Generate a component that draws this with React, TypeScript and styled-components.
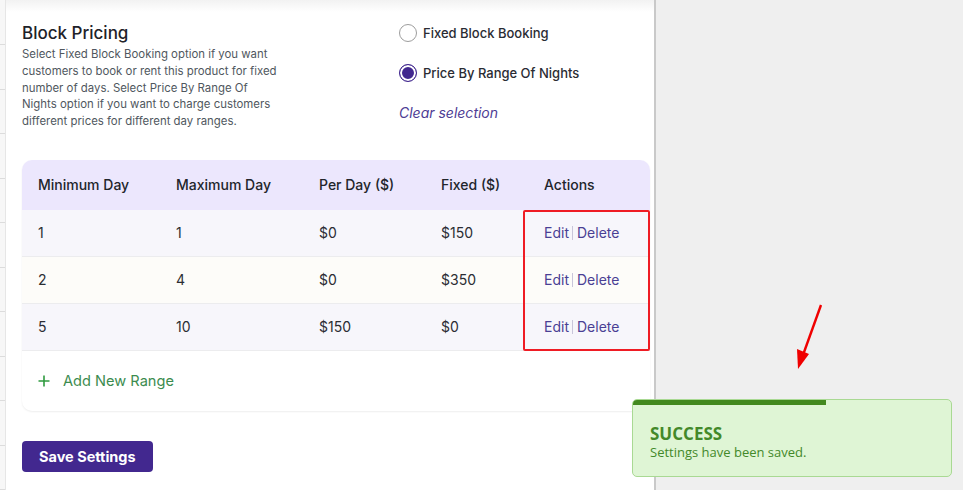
import styled, { createGlobalStyle } from 'styled-components';

const GlobalStyle = createGlobalStyle`
  html, body { margin: 0; padding: 0; }
  body {
    width: 963px;
    height: 490px;
    overflow: hidden;
    font-family: Inter, "Noto Sans", sans-serif;
    background: #efefef;
  }
`;

const rows = [
  { min: '1', max: '1', perDay: '$0', fixed: '$150' },
  { min: '2', max: '4', perDay: '$0', fixed: '$350' },
  { min: '5', max: '10', perDay: '$150', fixed: '$0' },
];

const App = () => {
  return (
    <Page>
      <GlobalStyle />
      <SideStrip>
        {Array.from({ length: 11 }).map((_, i) => (
          <StripLine key={i} />
        ))}
      </SideStrip>
      <Main>
        <TopFade />
        <Intro>
          <Description>
            <h2>Block Pricing</h2>
            <p>
              Select Fixed Block Booking option if you want customers to book or rent this
              product for fixed number of days. Select Price By Range Of Nights option if you
              want to charge customers different prices for different day ranges.
            </p>
          </Description>
          <Options>
            <Radio>
              <RadioDot $checked={false} />
              Fixed Block Booking
            </Radio>
            <Radio>
              <RadioDot $checked />
              Price By Range Of Nights
            </Radio>
            <ClearLink>Clear selection</ClearLink>
          </Options>
        </Intro>

        <TableCard>
          <HeadRow>
            <span>Minimum Day</span>
            <span>Maximum Day</span>
            <span>Per Day ($)</span>
            <span>Fixed ($)</span>
            <span>Actions</span>
          </HeadRow>
          <Body>
            {rows.map((r, i) => (
              <Row key={i} $alt={i % 2 === 1}>
                <span>{r.min}</span>
                <span>{r.max}</span>
                <span>{r.perDay}</span>
                <span>{r.fixed}</span>
                <Actions>
                  <a>Edit</a>
                  <Divider />
                  <a>Delete</a>
                </Actions>
              </Row>
            ))}
            <Highlight />
          </Body>
          <AddRange>
            <svg width="12" height="12" viewBox="0 0 12 12">
              <path d="M6 0.5v11M0.5 6h11" stroke="#2f9a3f" strokeWidth="1.6" />
            </svg>
            Add New Range
          </AddRange>
        </TableCard>

        <SaveButton>Save Settings</SaveButton>
      </Main>
      <Side />

      <Arrow width="40" height="80" viewBox="0 0 40 80">
        <path d="M30 2 L12 52" stroke="#f00000" strokeWidth="2.4" fill="none" />
        <path d="M7 66 L6 46 L18 51 Z" fill="#f00000" />
      </Arrow>

      <Toast>
        <Progress />
        <strong>SUCCESS</strong>
        <span>Settings have been saved.</span>
      </Toast>
    </Page>
  );
};

export default App;

const Page = styled.div`
  position: relative;
  display: flex;
  width: 963px;
  height: 490px;
`;

const SideStrip = styled.div`
  width: 5px;
  background: #f7f7f7;
  border-right: 1px solid #e6e6e6;
  padding-top: 44px;
  display: flex;
  flex-direction: column;
  gap: 44px;
`;

const StripLine = styled.div`
  height: 1px;
  background: #dcdcdc;
`;

const Main = styled.div`
  position: relative;
  width: 632px;
  padding: 0 0 0 16px;
  background: #fff;
  border-right: 2px solid #c9c9c9;
`;

const TopFade = styled.div`
  position: absolute;
  top: 0;
  left: 0;
  right: 0;
  height: 12px;
  background: linear-gradient(#f2f2f2, #fff);
`;

const Side = styled.div`
  flex: 1;
  background: #efefef;
`;

const Intro = styled.div`
  position: relative;
  display: flex;
  padding-top: 22px;
`;

const Description = styled.div`
  width: 377px;
  h2 {
    margin: 0 0 2px;
    font-size: 17px;
    font-weight: 500;
    color: #1e2229;
    line-height: 22px;
  }
  p {
    margin: 0;
    width: 258px;
    font-size: 11.4px;
    line-height: 16.8px;
    color: #50575e;
  }
`;

const Options = styled.div`
  display: flex;
  flex-direction: column;
  padding-top: 2px;
`;

const Radio = styled.label`
  display: flex;
  align-items: center;
  gap: 6px;
  height: 18px;
  margin-bottom: 22px;
  font-size: 13px;
  font-weight: 500;
  color: #2a2c33;
`;

const RadioDot = styled.span<{ $checked: boolean }>`
  box-sizing: border-box;
  width: 18px;
  height: 18px;
  border-radius: 50%;
  border: 1.5px solid ${p => (p.$checked ? '#42288f' : '#9d9d9d')};
  background: ${p => (p.$checked ? '#42288f' : '#fff')};
  box-shadow: ${p => (p.$checked ? 'inset 0 0 0 2px #fff' : 'none')};
`;

const ClearLink = styled.a`
  margin-top: 0;
  font-size: 14px;
  font-style: italic;
  color: #4d3c94;
`;

const TableCard = styled.div`
  margin-top: 30px;
  width: 628px;
  border-radius: 10px;
  background: #fff;
  box-shadow: 0 1px 2px rgba(0, 0, 0, 0.07);
  overflow: hidden;
`;

const cols = `
  display: grid;
  grid-template-columns: 138px 143px 122px 103px 1fr;
  align-items: center;
  padding-left: 16px;
  font-size: 14px;
`;

const HeadRow = styled.div`
  ${cols}
  height: 50px;
  background: #ece7fd;
  color: #22252b;
  font-weight: 500;
`;

const Body = styled.div`
  position: relative;
`;

const Row = styled.div<{ $alt: boolean }>`
  ${cols}
  height: 46px;
  border-bottom: 1px solid #ececee;
  background: ${p => (p.$alt ? '#fdfcf9' : '#f7f6fb')};
  color: #2b2d33;
`;

const Actions = styled.div`
  display: flex;
  align-items: center;
  color: #4a3f94;
  a {
    cursor: pointer;
  }
`;

const Divider = styled.span`
  width: 1px;
  height: 14px;
  background: #c9c6da;
  margin: 0 4px 0 3px;
`;

const Highlight = styled.div`
  position: absolute;
  top: 0;
  left: 501px;
  width: 123px;
  height: 137px;
  border: 2px solid #ef1c24;
  border-radius: 2px;
  pointer-events: none;
`;

const AddRange = styled.div`
  display: flex;
  align-items: center;
  gap: 13px;
  height: 60px;
  padding-left: 16px;
  font-size: 14.6px;
  color: #3c8c4f;
`;

const SaveButton = styled.button`
  margin-top: 30px;
  height: 31px;
  padding: 0 17px;
  border: none;
  border-radius: 4px;
  background: #42288f;
  color: #fff;
  font-family: Inter, "Noto Sans", sans-serif;
  font-size: 14.5px;
  font-weight: 700;
`;

const Arrow = styled.svg`
  position: absolute;
  left: 791px;
  top: 303px;
`;

const Toast = styled.div`
  position: absolute;
  left: 632px;
  top: 399px;
  box-sizing: border-box;
  width: 320px;
  height: 78px;
  padding: 23px 17px 0;
  border: 1.5px solid #a9d993;
  border-radius: 5px;
  background: #dff5d5;
  overflow: hidden;
  display: flex;
  flex-direction: column;
  font-family: "Open Sans", "Noto Sans", sans-serif;
  color: #43892a;
  strong {
    font-size: 17px;
    font-weight: 700;
    line-height: 21px;
  }
  span {
    font-size: 13px;
    line-height: 16px;
  }
`;

const Progress = styled.div`
  position: absolute;
  top: 0;
  left: 0;
  width: 193px;
  height: 5px;
  background: #43891f;
`;
